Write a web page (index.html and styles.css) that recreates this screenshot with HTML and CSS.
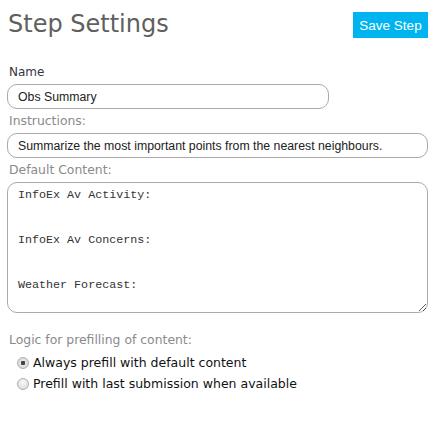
FILE: index.html
```html
<!DOCTYPE html>
<html>
<head>
<meta charset="utf-8">
<link rel="stylesheet" href="styles.css">
</head>
<body>
<div class="page">
  <header class="head">
    <h1 class="title">Step Settings</h1>
    <button class="save">Save Step</button>
  </header>
  <div class="field">
    <label class="lbl dark">Name</label>
    <input class="txt short" type="text" value="Obs Summary">
  </div>
  <div class="field">
    <label class="lbl">Instructions:</label>
    <input class="txt" type="text" value="Summarize the most important points from the nearest neighbours.">
  </div>
  <div class="field">
    <label class="lbl">Default Content:</label>
    <textarea class="area">InfoEx Av Activity:


InfoEx Av Concerns:


Weather Forecast:</textarea>
  </div>
  <div class="logic">
    <div class="lbl">Logic for prefilling of content:</div>
    <label class="opt"><input type="radio" name="p" class="rad" checked><span>Always prefill with default content</span></label>
    <label class="opt"><input type="radio" name="p" class="rad"><span>Prefill with last submission when available</span></label>
  </div>
</div>
</body>
</html>
```
FILE: styles.css
```css
html, body { margin: 0; padding: 0; background: #fff; }
.page { padding: 8px 13px 0 7px; font-family: "DejaVu Sans", Verdana, sans-serif; }
.head { display: flex; justify-content: space-between; align-items: flex-start; height: 56px; }
.title { margin: 2px 0 0 1px; font-weight: normal; font-size: 24px; color: #606060; }
.save { margin-top: 4px; width: 75px; height: 26px; border: none; background: #00b4ef; color: #fff; font-family: "Liberation Sans", Arial, sans-serif; font-size: 13.5px; padding: 0; }
.field { display: flex; flex-direction: column; }
.lbl { font-size: 12.4px; color: #8a8a8a; margin-left: 2px; line-height: 16px; height: 20px; }
.lbl.dark { color: #333344; font-size: 12px; }
.txt { box-sizing: border-box; height: 25px; width: 421px; border: 1px solid #aaa; border-radius: 10px; padding: 0 10px; font-family: "Liberation Sans", Arial, sans-serif; font-size: 12.3px; color: #222; margin: 0 0 4px 0; outline: none; }
.txt.short { width: 322px; }
.area { box-sizing: border-box; height: 131px; width: 421px; border: 1px solid #aaa; border-radius: 10px; padding: 5px 10px; font-family: "Liberation Mono", "Courier New", monospace; font-size: 11.7px; line-height: 15px; color: #333; resize: vertical; margin: 0; outline: none; }
.logic { margin-top: 19px; display: flex; flex-direction: column; }
.opt { display: flex; align-items: center; font-size: 12.5px; color: #111; margin-left: 10px; height: 21px; gap: 4px; }
.rad { appearance: none; -webkit-appearance: none; margin: 0; width: 12px; height: 12px; border-radius: 50%; border: 1px solid #b0b0b0; background: radial-gradient(circle at 50% 35%, #fafafa, #d4d4d4); box-sizing: border-box; }
.rad:checked { background: radial-gradient(circle, #444 0 2px, #e6e6e6 2.5px, #cfcfcf); }
```
